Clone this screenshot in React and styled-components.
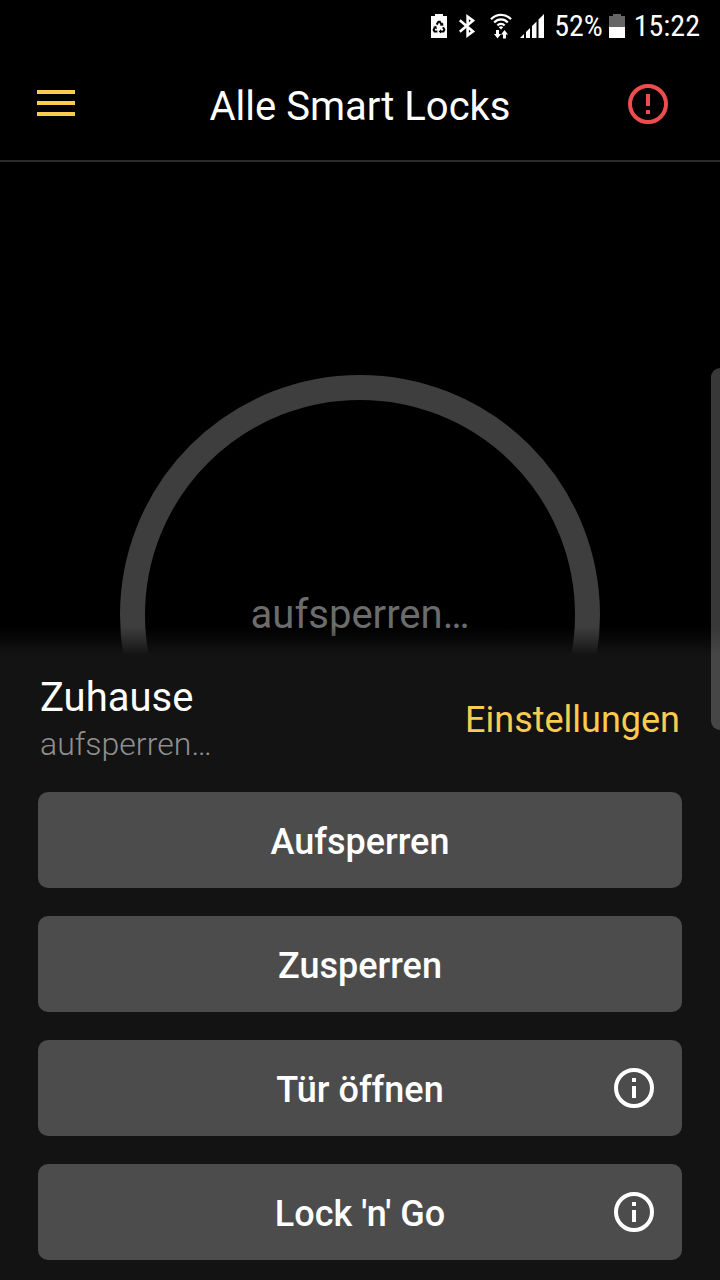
import styled, { createGlobalStyle } from "styled-components"

const GlobalStyle = createGlobalStyle`
  * {
    box-sizing: border-box;
  }

  body {
    margin: 0;
    background-color: #000;
    color: #fff;
    font-family: Roboto, "Noto Sans", sans-serif;
  }

  button {
    border: 0;
    font-family: inherit;
    cursor: pointer;
  }

  svg {
    display: block;
  }
`;

const Screen = styled.div`
  position: relative;
  display: flex;
  flex-direction: column;
  min-height: 100vh;
  overflow: hidden;
`;

const StatusBar = styled.div`
  display: flex;
  align-items: center;
  justify-content: flex-end;
  height: 50px;
  padding: 2px 20px 0;
  font-family: "Roboto Condensed", Roboto, sans-serif;
  font-size: 30px;
  line-height: 48px;
`;

const StatusIcons = styled.div`
  display: flex;
  align-items: center;
  gap: 8px;
  margin-right: 10px;
`;

const StatusBattery = styled.div`
  margin: 0 9px 0 6px;
`;

const Header = styled.header`
  display: grid;
  grid-template-columns: 1fr auto 1fr;
  align-items: center;
  height: 112px;
  padding: 4px 36px 0;
  border-bottom: 2px solid #2b2b2b;
`;

const Title = styled.h1`
  margin: 0;
  font-size: 40px;
  font-weight: 400;
  line-height: 48px;
`;

const IconButton = styled.button`
  justify-self: ${({ $end }) => ($end ? "end" : "start")};
  padding: ${({ $end }) => ($end ? "0 16px 6px" : "0 0 8px")};
  background: none;
  color: ${({ $color }) => $color};
`;

const Stage = styled.main`
  display: flex;
  flex: 1 0 0;
  justify-content: center;
  min-height: 400px;
  padding-top: 213px;
  overflow: hidden;
`;

const Ring = styled.div`
  display: flex;
  flex: none;
  align-items: center;
  justify-content: center;
  width: 480px;
  height: 480px;
  border: 25px solid #3e3e3e;
  border-radius: 50%;
  color: #6c6c6c;
  font-size: 40px;
  line-height: 48px;
`;

const Sheet = styled.section`
  position: relative;
  padding: 19px 38px 20px;
  background-color: #131313;

  &::before {
    content: "";
    position: absolute;
    right: 0;
    bottom: 100%;
    left: 0;
    height: 28px;
    background: linear-gradient(to top, #131313, transparent);
  }
`;

const SheetHead = styled.div`
  display: flex;
  align-items: center;
  justify-content: space-between;
  padding: 0 2px;
`;

const LockName = styled.h2`
  margin: 0;
  font-size: 40px;
  font-weight: 400;
  line-height: 48px;
`;

const LockState = styled.p`
  margin: 0;
  color: #8f8f8f;
  font-size: 32px;
  font-weight: 300;
  line-height: 44px;
`;

const SettingsLink = styled.a`
  color: #f9cb4f;
  font-size: 36px;
  line-height: 48px;
  text-decoration: none;
`;

const Actions = styled.div`
  display: flex;
  flex-direction: column;
  gap: 28px;
  margin-top: 26px;
`;

const ActionRow = styled.div`
  position: relative;
`;

const ActionButton = styled.button`
  display: block;
  width: 100%;
  height: 96px;
  padding: 4px 80px 0;
  border-radius: 10px;
  background-color: #4c4c4c;
  color: #fff;
  font-size: 36px;
  font-weight: 500;
  line-height: 48px;
`;

const InfoButton = styled.button`
  position: absolute;
  top: 28px;
  right: 28px;
  padding: 0;
  background: none;
  color: #fff;
`;

const EdgeHandle = styled.div`
  position: absolute;
  top: 368px;
  right: 0;
  width: 9px;
  height: 362px;
  border-radius: 10px 0 0 10px;
  background-color: rgba(255, 255, 255, 0.22);
`;

const MenuIcon = () => (
  <svg width="40" height="26" viewBox="0 0 40 26" fill="currentColor">
    <path d="M1 0h38v4H1zM1 11h38v4H1zM1 22h38v4H1z" />
  </svg>
)

const AlertIcon = () => (
  <svg width="40" height="40" viewBox="0 0 40 40">
    <circle cx="20" cy="20" r="18" fill="none" stroke="currentColor" strokeWidth="4" />
    <path d="M18 10h4v12h-4zM18 26h4v4h-4z" fill="currentColor" />
  </svg>
)

const InfoIcon = () => (
  <svg width="40" height="40" viewBox="0 0 40 40">
    <circle cx="20" cy="20" r="18" fill="none" stroke="currentColor" strokeWidth="4" />
    <path d="M18 10h4v4h-4zM18 18h4v12h-4z" fill="currentColor" />
  </svg>
)

const RecycleBatteryIcon = () => (
  <svg width="20" height="24" viewBox="-1 0 20 24">
    <path d="M4 0h8v2h4v22H0V2h4z" fill="#fff" />
    <g fill="none" stroke="#000" strokeWidth="2">
      <path d="M5.6 10.6 7.4 7.8h1.4l1.6 2.6" />
      <path d="M12 13.2l1.4 2.6-.9 1.6H9.4" />
      <path d="M6.4 17.4H3.5l-.9-1.6L4 13.4" />
    </g>
    <path d="M8.8 11.6 12.4 11.8 12 8.4zM10 15.2v4.4L7.6 17.4zM2 13l3.2-1.2.8 3.4z" fill="#000" />
  </svg>
)

const BluetoothIcon = () => (
  <svg width="24" height="24" viewBox="0 0 24 24" fill="none" stroke="#fff" strokeWidth="2.6">
    <path d="M1.800 6.200 15 17.400 9.600 21.400V2.600L15 6.600 1.800 17.800" />
  </svg>
)

const WifiIcon = () => (
  <svg width="22" height="26" viewBox="0 0 22 26">
    <g fill="none" stroke="#fff" strokeWidth="2.2">
      <path d="M1 6.2C6.4.4 15.6.4 21 6.2" />
      <path d="M4.2 9.4c3.8-4 9.8-4 13.6 0" />
      <path d="M7.4 12.6c2-2.2 5.2-2.2 7.2 0" />
    </g>
    <path d="M8.8 14.2a3.2 3.2 0 0 1 4.4 0L11 16.6z" fill="#fff" />
    <path d="M6 17h3v4h2l-3.5 4.5L4 21h2zM13 25.5v-4h-2L14.500 17l3.5 4.5h-2v4z" fill="#fff" />
  </svg>
)

const SignalIcon = () => (
  <svg width="24" height="24" viewBox="0 0 24 24" fill="#fff">
    <path d="M0 24l4-4v4zM6 24v-6l4-4v10zM12 24V12l4.500-4.500V24zM18.500 24V5.500L24 0v24z" />
  </svg>
)

const BatteryIcon = () => (
  <svg width="16" height="24" viewBox="0 0 16 24">
    <path d="M4 0h8v2h4v11H0V2h4z" fill="#666" />
    <path d="M0 13h16v11H0z" fill="#fff" />
  </svg>
)

const actions = [
  { label: "Aufsperren" },
  { label: "Zusperren" },
  { label: "Tür öffnen", info: true },
  { label: "Lock 'n' Go", info: true },
];

export default function App() {
  return (
    <Screen>
      <GlobalStyle />
      <StatusBar>
        <StatusIcons>
          <RecycleBatteryIcon />
          <BluetoothIcon />
          <WifiIcon />
          <SignalIcon />
        </StatusIcons>
        <span>52%</span>
        <StatusBattery>
          <BatteryIcon />
        </StatusBattery>
        <span>15:22</span>
      </StatusBar>
      <Header>
        <IconButton $color="#f9cb4f" aria-label="Menü">
          <MenuIcon />
        </IconButton>
        <Title>Alle Smart Locks</Title>
        <IconButton $color="#ef4d4d" $end aria-label="Warnung">
          <AlertIcon />
        </IconButton>
      </Header>
      <Stage>
        <Ring>aufsperren…</Ring>
      </Stage>
      <Sheet>
        <SheetHead>
          <div>
            <LockName>Zuhause</LockName>
            <LockState>aufsperren…</LockState>
          </div>
          <SettingsLink href="#einstellungen">Einstellungen</SettingsLink>
        </SheetHead>
        <Actions>
          {actions.map(({ label, info }) => (
            <ActionRow key={label}>
              <ActionButton>{label}</ActionButton>
              {info && (
                <InfoButton aria-label={`Info: ${label}`}>
                  <InfoIcon />
                </InfoButton>
              )}
            </ActionRow>
          ))}
        </Actions>
      </Sheet>
      <EdgeHandle />
    </Screen>
  )
}
